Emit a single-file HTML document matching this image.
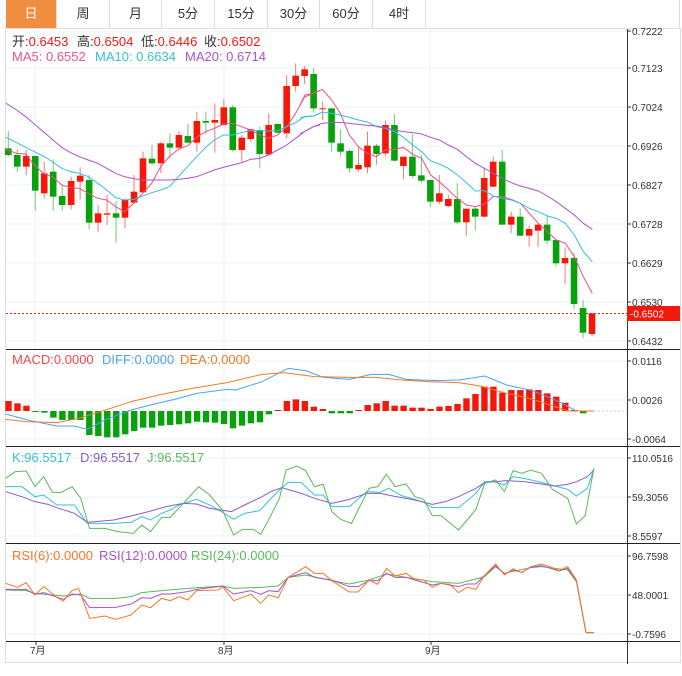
<!DOCTYPE html>
<html><head><meta charset="utf-8">
<style>
body{margin:0;width:682px;height:676px;background:#fff;overflow:hidden;font-family:"Liberation Sans","Noto Sans CJK SC",sans-serif;}
.tabs{position:absolute;left:6px;top:0;width:674px;height:28px;border-bottom:1px solid #ddd;}
.tab{position:absolute;top:0;height:28px;line-height:28px;text-align:center;font-size:13px;color:#333;border-right:1px solid #ddd;box-sizing:border-box;}
svg{position:absolute;left:0;top:0}
</style></head><body>
<div class="tabs">
<div class="tab" style="left:0;width:51px;background:#f08d3e;color:#fff;">日</div>
<div class="tab" style="left:51px;width:53px">周</div>
<div class="tab" style="left:104px;width:52px">月</div>
<div class="tab" style="left:156px;width:53px">5分</div>
<div class="tab" style="left:209px;width:53px">15分</div>
<div class="tab" style="left:262px;width:52px">30分</div>
<div class="tab" style="left:314px;width:53px">60分</div>
<div class="tab" style="left:367px;width:53px">4时</div>
<div class="tab" style="left:420px;width:254px;border-right:1px solid #ddd"></div>
</div>
<svg id="s" width="682" height="676" xmlns="http://www.w3.org/2000/svg" font-family="Liberation Sans, Noto Sans CJK SC, sans-serif">
<g font-size="13">
<text y="46" fill="#333"><tspan x="12">开:</tspan><tspan fill="#f0190f">0.6453</tspan><tspan x="77">高:</tspan><tspan fill="#f0190f">0.6504</tspan><tspan x="141">低:</tspan><tspan fill="#f0190f">0.6446</tspan><tspan x="204">收:</tspan><tspan fill="#f0190f">0.6502</tspan></text>
<text y="61" fill="#e8548c"><tspan x="12">MA5: 0.6552</tspan><tspan x="95" fill="#34c1d8">MA10: 0.6634</tspan><tspan x="185" fill="#a954c8">MA20: 0.6714</tspan></text>
<text y="364" fill="#f04a4a"><tspan x="12">MACD:0.0000</tspan><tspan x="102" fill="#4aa3f0">DIFF:0.0000</tspan><tspan x="180" fill="#f07a2a">DEA:0.0000</tspan></text>
<text y="462" fill="#34c1d8"><tspan x="12">K:96.5517</tspan><tspan x="80" fill="#8a5cc8">D:96.5517</tspan><tspan x="147" fill="#5cb85c">J:96.5517</tspan></text>
<text y="560" fill="#f07a2a"><tspan x="12">RSI(6):0.0000</tspan><tspan x="99" fill="#a954c8">RSI(12):0.0000</tspan><tspan x="191" fill="#5cb85c">RSI(24):0.0000</tspan></text>
</g>
</svg>
<script>
var s=document.getElementById('s'),NS='http://www.w3.org/2000/svg';
function el(t,a,front){var e=document.createElementNS(NS,t);for(var k in a)e.setAttribute(k,a[k]);if(front)s.insertBefore(e,s.firstChild);else s.appendChild(e);return e;}
var gy=[31,68,107,146,185,224,263,302,341,361,400,439,458,497,536,556,595,634];
gy.forEach(function(y){el('line',{x1:6,x2:627,y1:y,y2:y,stroke:'#edf3f5'},1)});
[35,224,430].forEach(function(x){el('line',{x1:x,x2:x,y1:29,y2:641,stroke:'#edf3f5'},1)});
el('rect',{x:5.5,y:28.5,width:675,height:634,fill:'none',stroke:'#ddd'});
el('line',{x1:627.5,x2:627.5,y1:29,y2:664,stroke:'#333'});
[349.5,446.5,543.5,641.5].forEach(function(y){el('line',{x1:6,x2:680,y1:y,y2:y,stroke:'#222'})});
var lab=[[31,'0.7222'],[68,'0.7123'],[107,'0.7024'],[146,'0.6926'],[185,'0.6827'],[224,'0.6728'],[263,'0.6629'],[302,'0.6530'],[341,'0.6432'],
[361,'0.0116'],[400,'0.0026'],[439,'-0.0064'],[458,'110.0516'],[497,'59.3056'],[536,'8.5597'],[556,'96.7598'],[595,'48.0001'],[634,'-0.7596']];
lab.forEach(function(l){el('line',{x1:627,x2:631,y1:l[0],y2:l[0],stroke:'#333'});var t=el('text',{x:632,y:l[0]+4,'font-size':'10',fill:'#333'});t.textContent=l[1];});
[[36,'7月'],[224,'8月'],[431,'9月']].forEach(function(m){el('line',{x1:m[0],x2:m[0],y1:641,y2:645,stroke:'#333'});var t=el('text',{x:m[0]-6,y:654,'font-size':'10',fill:'#333'});t.textContent=m[1];});
el('line',{x1:6,x2:627,y1:313.5,y2:313.5,stroke:'#f0190f','stroke-dasharray':'2,2'});
el('rect',{x:627,y:306,width:53,height:15,fill:'#f5170a'});
var t=el('text',{x:630,y:317.5,'font-size':'10',fill:'#fff'});t.textContent='-0.6502';
var A=[[265,285,213,290,'G'],[285,320,268,335,'G'],[288,320,270,345,'R'],[288,392,288,452,'G'],[340,400,305,415,'R'],[335,410,298,452,'G'],[408,435,378,452,'G'],[363,435,350,448,'R'],[347,365,322,418,'R'],[360,488,345,508,'G'],[460,488,435,515,'R'],[460,464,405,495,'R'],[460,473,423,548,'G'],[420,473,415,505,'R'],[395,428,345,430,'R'],[295,397,275,400,'R'],[296,310,255,315,'G'],[250,310,245,340,'R'],[250,263,220,295,'G'],[225,263,213,265,'R'],[228,248,192,250,'G'],[183,248,155,275,'R'],[183,188,155,222,'G'],[180,188,130,278,'R'],[142,195,118,198,'R'],[142,270,135,275,'G'],[233,270,225,305,'R'],[208,237,205,245,'R'],[210,282,200,325,'G'],[195,283,160,287,'R'],[192,218,192,220,'G'],[78,220,45,235,'R'],[47,78,10,95,'R'],[28,48,18,72,'R'],[42,145,25,158,'G'],
[145,148,125,180,'R'],[145,248,145,275,'G'],[250,275,208,290,'G'],[273,325,268,338,'G'],[315,328,260,335,'R'],[257,322,215,340,'R'],[257,282,252,315,'G'],[195,280,182,288,'R'],[195,302,162,305,'G'],[290,318,290,358,'R'],[290,348,222,355,'G'],[346,362,285,368,'G'],[360,425,360,442,'G'],[400,425,345,432,'R'],[417,438,405,442,'R'],[417,487,370,493,'G'],[446,487,446,527,'R'],[446,470,440,510,'G'],[354,470,322,472,'R'],[305,380,290,382,'R'],[305,494,270,494,'G'],[470,494,455,520,'R'],[470,527,445,528,'G'],[507,527,497,560,'R'],[494,512,490,560,'R'],[494,542,470,552,'G'],[540,610,540,620,'G'],[594,610,562,672,'R'],[594,732,578,748,'G'],[744,818,720,835,'G'],[760,822,760,828,'R']];
A.forEach(function(c,i){var x=8.3+8.98*i,col=c[4]=='R'?'#f5170a':'#07a10b',wc=c[4]=='R'?'#f37a72':'#6fcc6f';
 var y=function(v){return 60+v/3};
 el('line',{x1:x,x2:x,y1:y(c[2]),y2:y(c[3]),stroke:wc});
 el('rect',{x:x-3.3,y:y(c[0]),width:6.6,height:Math.max(1,(c[1]-c[0])/3),fill:col});});
function pl(pts,col,fx,fy){el('polyline',{points:pts.map(function(p){return fx(p[0])+','+fy(p[1])}).join(' '),fill:'none',stroke:col,'stroke-width':1});}
var m4x=function(v){return v/3},m5x=function(v){return 300+v/3},my=function(v){return 60+v/3};
function ma(a,b,col){pl(a,col,m4x,my);pl(b,col,m5x,my);}
ma([[18,268],[50,280],[77,282],[103,315],[130,340],[157,350],[185,375],[212,383],[238,385],[265,400],[293,415],[320,420],[347,440],[373,455],[401,430],[428,400],[455,370],[482,320],[508,290],[535,268],[562,258],[590,232],[617,215],[643,205],[670,192],[698,190],[725,200],[752,210],[779,225],[805,235],[833,225],[860,200],[887,160],[913,112],[940,100],[960,92]],
[[0,135],[15,105],[40,100],[67,88],[95,120],[121,160],[148,225],[175,260],[202,280],[229,290],[256,270],[283,268],[310,262],[338,283],[365,295],[392,345],[418,365],[445,390],[472,415],[499,435],[526,440],[553,432],[580,410],[607,410],[634,418],[661,430],[688,460],[715,490],[742,515],[769,540],[796,550],[823,590],[850,650],[877,700]],'#ec4f86');
ma([[18,232],[50,248],[77,262],[103,275],[130,288],[157,305],[185,325],[212,335],[238,340],[265,350],[293,370],[320,390],[347,413],[373,420],[401,418],[428,408],[455,398],[482,390],[508,380],[535,350],[562,320],[590,290],[617,262],[643,240],[670,225],[698,225],[725,218],[752,212],[779,212],[805,213],[833,212],[860,200],[887,188],[913,170],[940,168],[960,160]],
[[0,172],[40,168],[67,156],[95,160],[121,165],[148,172],[175,180],[202,186],[229,200],[256,205],[283,215],[310,232],[338,255],[365,275],[392,303],[418,312],[445,325],[472,345],[499,368],[526,393],[553,392],[580,408],[607,415],[634,420],[661,430],[688,445],[715,455],[742,468],[769,475],[796,490],[823,525],[850,575],[877,605]],'#34c1d8');
ma([[18,130],[50,150],[77,170],[103,192],[130,215],[157,238],[185,262],[212,278],[238,290],[265,300],[293,310],[320,325],[347,340],[373,350],[401,356],[428,360],[455,360],[482,360],[508,360],[535,358],[562,355],[590,350],[617,340],[643,330],[670,322],[698,315],[725,308],[752,298],[779,295],[805,285],[833,270],[860,255],[887,235],[913,215],[940,200],[960,195]],
[[0,222],[40,200],[67,190],[95,187],[121,187],[148,190],[175,193],[202,196],[229,198],[256,203],[283,210],[310,215],[338,218],[365,222],[392,232],[418,240],[445,255],[472,268],[499,290],[526,310],[553,325],[580,340],[607,355],[634,368],[661,378],[688,385],[715,393],[742,408],[769,425],[796,445],[823,465],[850,490],[877,508]],'#a954c8');
var B=[[183,'R'],[190,'R'],[197,'R'],[215,'G'],[218,'G'],[233,'G'],[240,'G'],[240,'G'],[240,'G'],[285,'G'],[288,'G'],[292,'G'],[292,'G'],[283,'G'],[273,'G'],[263,'G'],[263,'G'],[257,'G'],[255,'G'],[253,'G'],[250,'G'],[245,'G'],[247,'G'],[248,'G'],[252,'G'],[265,'G'],[257,'G'],[250,'G'],[247,'G'],[223,'G'],[210,'R'],[183,'R'],[178,'R'],[183,'R'],[200,'R'],[207,'R'],[220,'G'],[220,'G'],[220,'G'],[210,'R'],[195,'R'],[190,'R'],[183,'R'],[197,'R'],[197,'R'],[203,'R'],[203,'R'],[207,'R'],[200,'R'],[198,'R'],[192,'R'],[175,'R'],[162,'R'],[140,'R'],[140,'R'],[158,'R'],[150,'R'],[150,'R'],[148,'R'],[150,'R'],[160,'R'],[170,'R'],[188,'R'],[210,'R'],[220,'G']];
B.forEach(function(b,i){var x=8.3+8.98*i,y=340+b[0]/3,z=411;el('rect',{x:x-3,y:Math.min(y,z),width:6.4,height:Math.max(1,Math.abs(z-y)),fill:b[1]=='R'?'#f5170a':'#07a10b'});});
var zx=function(v){return v/2.29},zy=function(v){return 340+v/3};
pl([[13,222],[70,242],[130,258],[170,258],[200,268],[240,240],[300,210],[350,193],[400,178],[450,160],[520,148],[540,150],[600,125],[660,85],[700,92],[740,112],[800,118],[850,103],[890,103],[930,118],[1000,122],[1050,120],[1110,108],[1160,135],[1220,152],[1280,185],[1320,213],[1360,213]],'#4aa3f0',zx,zy);
pl([[13,238],[60,245],[130,248],[180,235],[230,215],[300,185],[370,163],[440,145],[520,128],[600,103],[650,98],[720,110],[800,112],[860,112],[920,120],[980,125],[1050,128],[1100,138],[1160,160],[1220,178],[1300,213],[1360,213]],'#f07a2a',zx,zy);
el('line',{x1:594,x2:627,y1:411,y2:411,stroke:'#ccc','stroke-dasharray':'2,2'});
pl([[13,440],[50,440],[80,470],[100,465],[130,495],[170,495],[200,550],[260,550],[300,547],[325,530],[345,540],[370,520],[390,510],[410,495],[450,478],[480,495],[510,517],[535,538],[560,520],[595,512],[615,483],[640,450],[660,427],[690,428],[720,465],[740,465],[760,500],[800,500],[840,455],[870,457],[890,445],[920,467],[950,478],[970,487],[990,503],[1050,503],[1090,460],[1110,425],[1130,425],[1155,435],[1175,410],[1200,415],[1240,427],[1270,438],[1300,448],[1320,468],[1345,445],[1360,388]],'#34c1d8',zx,zy);
pl([[13,455],[50,470],[80,485],[110,493],[130,503],[170,520],[200,547],[260,540],[300,528],[340,515],[380,500],[420,490],[450,492],[480,505],[530,515],[560,495],[600,470],[620,455],[645,443],[690,460],[720,475],[760,490],[800,478],[840,460],[870,460],[900,468],[950,480],[990,493],[1020,485],[1050,470],[1090,445],[1110,428],[1160,422],[1200,425],[1240,432],[1270,438],[1300,433],[1320,425],[1345,410],[1360,390]],'#8a5cc8',zx,zy);
pl([[13,415],[35,395],[60,393],[80,440],[100,410],[120,457],[140,457],[165,440],[185,475],[205,565],[240,565],[270,575],[305,580],[325,555],[345,575],[370,532],[390,532],[420,490],[455,440],[480,465],[510,512],[535,585],[555,568],[580,568],[597,583],[615,540],[640,475],[655,390],[680,378],[700,392],[720,440],[740,433],[760,515],[780,538],[805,550],[820,510],[845,445],[865,440],[885,403],[905,440],[930,432],[950,470],[970,478],[990,527],[1010,527],[1050,570],[1070,540],[1090,508],[1110,430],[1135,420],[1155,455],[1175,392],[1195,400],[1215,390],[1240,400],[1265,448],[1300,475],[1320,552],[1340,527],[1360,385]],'#5cb85c',zx,zy);
pl([[13,750],[60,752],[80,760],[145,768],[185,762],[205,775],[265,775],[300,770],[325,758],[370,752],[430,745],[510,738],[535,745],[597,742],[637,738],[660,712],[700,705],[760,722],[800,732],[845,720],[885,702],[930,712],[990,725],[1050,730],[1110,710],[1135,680],[1155,700],[1215,683],[1240,680],[1300,690],[1320,725],[1342,878],[1360,878]],'#5cb85c',zx,zy);
pl([[13,748],[60,748],[80,763],[100,758],[145,778],[165,762],[185,765],[205,803],[265,802],[300,792],[325,773],[345,775],[370,762],[390,762],[430,755],[450,748],[510,738],[535,762],[575,752],[597,763],[615,752],[637,755],[660,712],[700,698],[720,712],[760,720],[800,740],[820,740],[845,722],[865,722],[885,700],[905,712],[930,712],[950,720],[990,735],[1010,730],[1050,740],[1070,732],[1090,732],[1110,705],[1135,677],[1155,702],[1175,690],[1195,697],[1215,682],[1240,677],[1260,685],[1280,693],[1300,685],[1320,722],[1342,878],[1360,878]],'#a954c8',zx,zy);
pl([[13,730],[40,742],[60,728],[80,765],[100,740],[130,772],[145,783],[165,752],[180,745],[205,835],[240,828],[265,838],[300,825],[325,795],[345,803],[370,775],[390,782],[410,770],[430,780],[450,752],[500,750],[510,740],[535,782],[575,763],[597,790],[615,765],[637,773],[660,712],[700,680],[720,700],[740,700],[760,722],[800,756],[820,756],[845,720],[865,733],[885,685],[905,708],[930,700],[950,718],[970,720],[990,742],[1010,730],[1030,733],[1050,758],[1070,742],[1090,748],[1110,705],[1135,672],[1155,705],[1175,686],[1195,698],[1215,680],[1240,672],[1260,680],[1280,692],[1300,680],[1320,720],[1342,878],[1360,878]],'#f07a2a',zx,zy);
</script>
</body></html>
